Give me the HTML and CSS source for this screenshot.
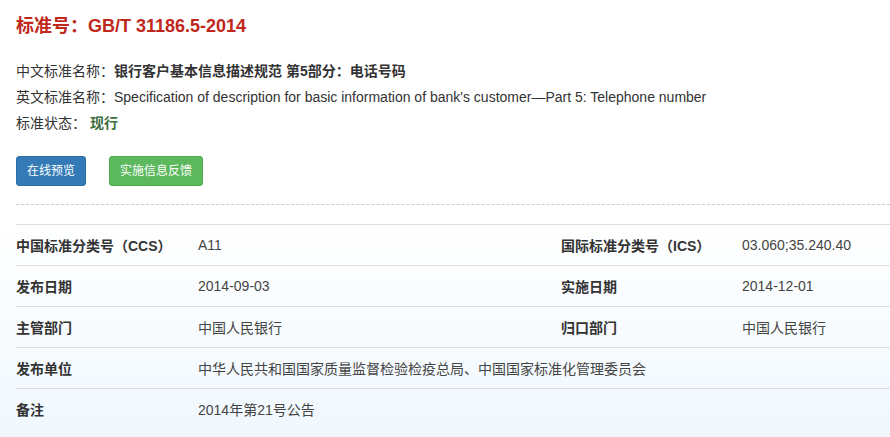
FILE: index.html
```html
<!DOCTYPE html>
<html lang="zh-CN">
<head>
    <meta charset="UTF-8">
    <meta name="viewport" content="width=device-width, initial-scale=1.0">
    <title>GB/T 31186.5-2014</title>
    <link rel="stylesheet" href="styles.css">
</head>
<body>
    <div class="page">
        <h1 class="std-title">标准号：GB/T 31186.5-2014</h1>
        <div class="info">
            <p>中文标准名称：<b>银行客户基本信息描述规范 第5部分：电话号码</b></p>
            <p>英文标准名称：Specification of description for basic information of bank's customer—Part 5: Telephone number</p>
            <p>标准状态： <span class="state">现行</span></p>
        </div>
        <div class="actions">
            <button class="btn btn-blue">在线预览</button>
            <button class="btn btn-green">实施信息反馈</button>
        </div>
        <hr class="dash">
        <table class="detail">
            <colgroup>
                <col class="c-label">
                <col class="c-value">
                <col class="c-label2">
                <col>
            </colgroup>
            <tr>
                <th>中国标准分类号（CCS）</th>
                <td>A11</td>
                <th>国际标准分类号（ICS）</th>
                <td>03.060;35.240.40</td>
            </tr>
            <tr>
                <th>发布日期</th>
                <td>2014-09-03</td>
                <th>实施日期</th>
                <td>2014-12-01</td>
            </tr>
            <tr>
                <th>主管部门</th>
                <td>中国人民银行</td>
                <th>归口部门</th>
                <td>中国人民银行</td>
            </tr>
            <tr>
                <th>发布单位</th>
                <td colspan="3">中华人民共和国国家质量监督检验检疫总局、中国国家标准化管理委员会</td>
            </tr>
            <tr>
                <th>备注</th>
                <td colspan="3">2014年第21号公告</td>
            </tr>
        </table>
    </div>
</body>
</html>
```

FILE: styles.css
```css
html, body {
    margin: 0;
    height: 100%;
}
body {
    font-family: "Liberation Sans", Arial, "Noto Sans CJK SC", sans-serif;
    font-size: 14px;
    color: #333;
    background: linear-gradient(to bottom, #fff 0%, #fff 50%, #f0f8fe 100%);
    overflow: hidden;
}
.page {
    padding: 13px 0 0 16px;
}
.std-title {
    margin: 0;
    font-size: 18px;
    line-height: 26px;
    font-weight: bold;
    color: #c0281d;
}
.info {
    margin-top: 19px;
}
.info p {
    margin: 0;
    line-height: 26px;
    white-space: nowrap;
}
.info b {
    font-weight: bold;
}
.state {
    color: #3c6e3c;
    font-weight: bold;
}
.actions {
    margin-top: 20px;
    display: flex;
    gap: 23px;
}
.btn {
    font-family: inherit;
    font-size: 12px;
    line-height: 18px;
    padding: 5px 10px;
    border: 1px solid transparent;
    border-radius: 3px;
    color: #fff;
    cursor: pointer;
}
.btn-blue {
    background-color: #337ab7;
    border-color: #2e6da4;
}
.btn-green {
    background-color: #5cb85c;
    border-color: #4cae4c;
}
.dash {
    margin: 18px 0 0;
    border: none;
    border-top: 1px dashed #ccc;
    height: 0;
}
.detail {
    margin-top: 19px;
    width: 100%;
    border-collapse: collapse;
    table-layout: fixed;
}
.c-label { width: 182px; }
.c-value { width: 363px; }
.c-label2 { width: 181px; }
.detail th,
.detail td {
    border-top: 1px solid #ddd;
    height: 40px;
    padding: 0;
    text-align: left;
    vertical-align: middle;
    white-space: nowrap;
}
.detail th {
    font-weight: bold;
    color: #333;
}
.detail td {
    color: #444;
}
```
